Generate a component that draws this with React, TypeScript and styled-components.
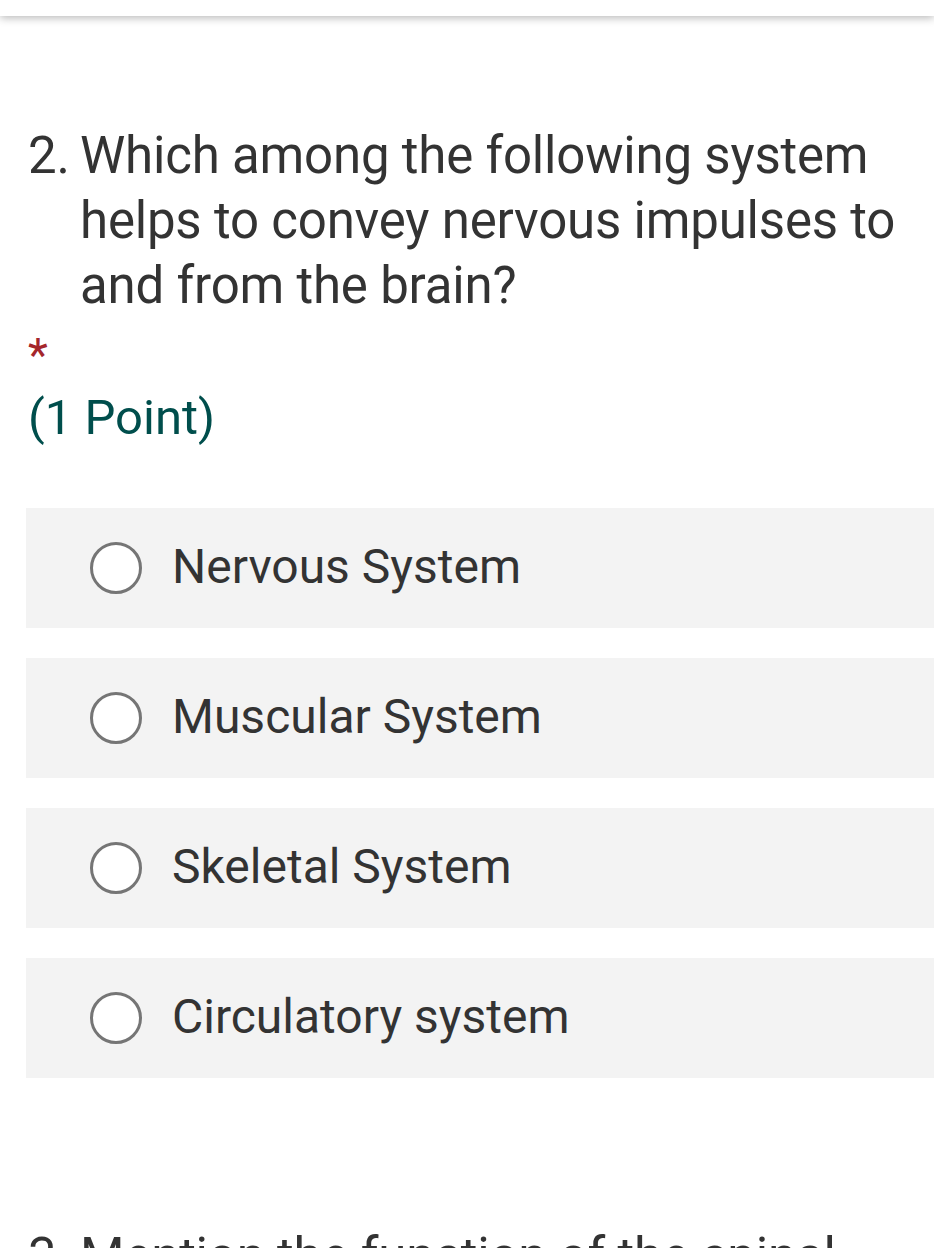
import React from 'react';
import styled, { createGlobalStyle } from 'styled-components';

const GlobalStyle = createGlobalStyle`
  html, body {
    margin: 0;
    padding: 0;
    background: #ffffff;
    overflow: hidden;
  }
  body {
    font-family: Roboto, "Noto Sans", "Liberation Sans", sans-serif;
    color: #333333;
  }
`;

const Page = styled.div`
  width: 934px;
  height: 1248px;
  overflow: hidden;
  display: flex;
  flex-direction: column;
`;

const TopBar = styled.header`
  height: 16px;
  background: #ffffff;
  box-shadow: 0 2px 8px rgba(0, 0, 0, 0.28);
  position: relative;
  z-index: 1;
  flex-shrink: 0;
`;

const QuestionBlock = styled.section<{ top: number }>`
  margin-top: ${({ top }) => top}px;
  padding-left: 28px;
  display: flex;
  flex-direction: column;
`;

const Title = styled.div`
  display: flex;
  font-size: 51px;
  line-height: 65px;
  letter-spacing: -0.2px;
  color: #333333;
`;

const Number = styled.span`
  width: 52px;
  flex-shrink: 0;
`;

const TitleText = styled.span`
  flex: 1;
  white-space: normal;
`;

const Required = styled.div`
  margin-top: 14px;
  font-size: 46px;
  line-height: 46px;
  color: #a4262c;
`;

const Points = styled.div`
  margin-top: 12px;
  font-size: 49px;
  line-height: 56px;
  color: #004e4c;
`;

const Options = styled.div`
  margin-top: 62px;
  margin-left: -2px;
  display: flex;
  flex-direction: column;
  gap: 30px;
`;

const Option = styled.label`
  height: 120px;
  background: #f3f3f3;
  display: flex;
  align-items: center;
  padding-left: 64px;
  gap: 30px;
`;

const Radio = styled.span`
  width: 52px;
  height: 52px;
  box-sizing: border-box;
  border: 3px solid #757575;
  border-radius: 50%;
  background: #ffffff;
  flex-shrink: 0;
`;

const OptionText = styled.span`
  font-size: 48px;
  color: #333333;
  line-height: 1;
  padding-bottom: 2px;
`;

const options = [
  'Nervous System',
  'Muscular System',
  'Skeletal System',
  'Circulatory system',
];

const App: React.FC = () => {
  return (
    <Page>
      <GlobalStyle />
      <TopBar />
      <QuestionBlock top={107}>
        <Title>
          <Number>2.</Number>
          <TitleText>
            Which among the following system helps to convey nervous impulses to and from the brain?
          </TitleText>
        </Title>
        <Required>*</Required>
        <Points>(1 Point)</Points>
        <Options>
          {options.map((o) => (
            <Option key={o}>
              <Radio />
              <OptionText>{o}</OptionText>
            </Option>
          ))}
        </Options>
      </QuestionBlock>
      <QuestionBlock top={146}>
        <Title>
          <Number>3.</Number>
          <TitleText>Mention the function of the spinal cord</TitleText>
        </Title>
      </QuestionBlock>
    </Page>
  );
};

export default App;
